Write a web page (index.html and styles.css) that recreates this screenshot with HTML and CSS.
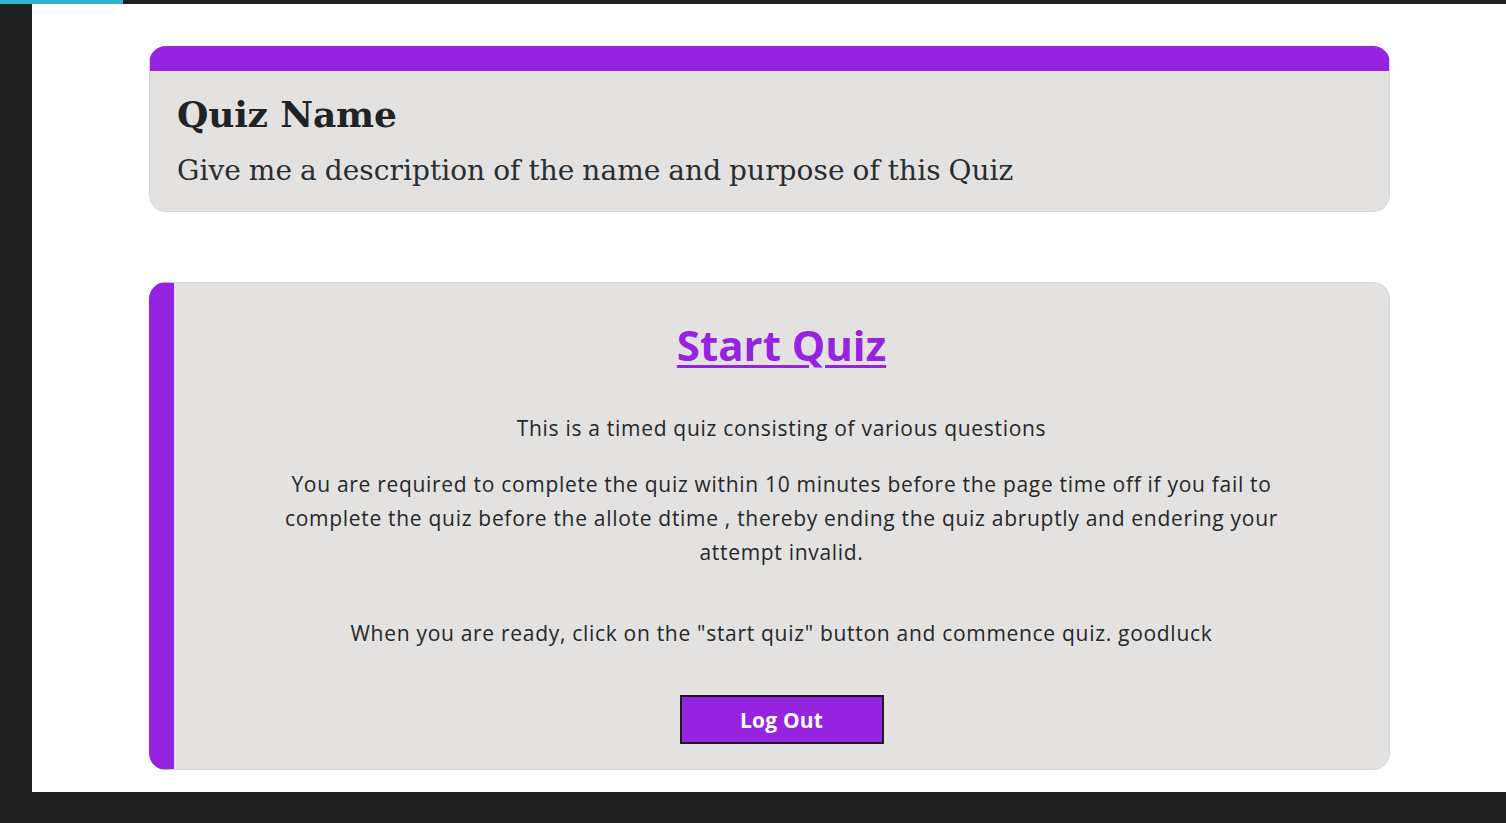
FILE: index.html
```html
<!DOCTYPE html>
<html>
<head>
<meta charset="utf-8">
<title>Quiz</title>
<link rel="stylesheet" href="styles.css">
</head>
<body>
<div class="topbar"><div class="tab"></div></div>
<div class="frame">
  <div class="gutter"></div>
  <main class="page">
    <section class="card head-card">
      <h1 class="quiz-title">Quiz Name</h1>
      <p class="quiz-desc">Give me a description of the name and purpose of this Quiz</p>
    </section>
    <section class="card info-card">
      <a class="start" href="#">Start Quiz</a>
      <p class="line first">This is a timed quiz consisting of various questions</p>
      <p class="line">You are required to complete the quiz within 10 minutes before the page time off if you fail to complete the quiz before the allote dtime , thereby ending the quiz abruptly and endering your attempt invalid.</p>
      <p class="line ready">When you are ready, click on the "start quiz" button and commence quiz. goodluck</p>
      <button class="logout">Log Out</button>
    </section>
  </main>
</div>
</body>
</html>
```
FILE: styles.css
```css
html, body {
  margin: 0;
  padding: 0;
  background: #202020;
  width: 1506px;
  height: 823px;
  overflow: hidden;
}
.topbar {
  height: 4px;
  background: #202020;
}
.tab {
  width: 123px;
  height: 4px;
  background: #2fb5cc;
}
.frame {
  display: flex;
  height: 788px;
}
.gutter {
  width: 32px;
  background: #202020;
}
.page {
  flex: 1;
  background: #ffffff;
  padding: 42px 116px 0 117px;
  box-sizing: border-box;
}
.card {
  background: #e3e2e1;
  border: 1px solid #d9d8d8;
  border-radius: 17px;
  box-sizing: border-box;
}
.head-card {
  height: 166px;
  border-top: 25px solid #9523e0;
  padding: 17px 27px 0;
}
.quiz-title {
  margin: 0;
  font-family: "DejaVu Serif", "Liberation Serif", serif;
  font-weight: bold;
  font-size: 36px;
  line-height: 52px;
  color: #1f2326;
  letter-spacing: -0.2px;
}
.quiz-desc {
  margin: 11px 0 0;
  font-family: "DejaVu Serif", "Liberation Serif", serif;
  font-size: 28px;
  line-height: 40px;
  color: #2a2d30;
  letter-spacing: 0.05px;
  word-spacing: -1px;
}
.info-card {
  margin-top: 70px;
  height: 488px;
  border-left: 25px solid #9523e0;
  display: flex;
  flex-direction: column;
  align-items: center;
  text-align: center;
  padding: 35px 100px 0;
  font-family: "Open Sans", "Noto Sans", sans-serif;
  color: #252729;
}
.start {
  font-family: "Open Sans", sans-serif;
  font-weight: bold;
  font-size: 42px;
  line-height: 54px;
  color: #9523e0;
  text-decoration: underline;
  text-decoration-thickness: 3px;
  text-underline-offset: 4px;
  letter-spacing: 0;
}
.line {
  margin: 0;
  max-width: 1000px;
  font-size: 21px;
  line-height: 34px;
  letter-spacing: 0.7px;
}
.line.first {
  margin-top: 39px;
  margin-bottom: 22px;
}
.line.ready {
  margin-top: 47px;
}
.logout {
  margin-top: 45px;
  width: 204px;
  height: 49px;
  background: #9523e0;
  border: 2px solid #1c1c1c;
  color: #ffffff;
  font-family: "Open Sans", sans-serif;
  font-weight: bold;
  font-size: 21px;
  letter-spacing: 0.2px;
  cursor: pointer;
}
```
